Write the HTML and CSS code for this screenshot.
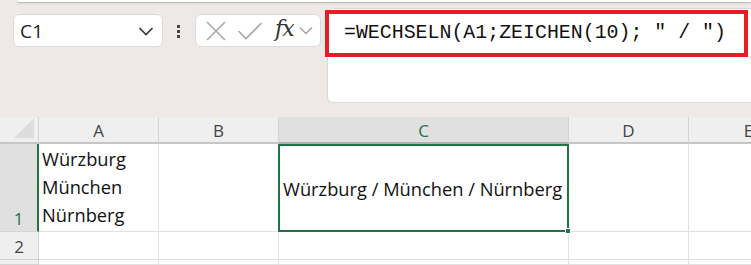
FILE: index.html
```html
<!DOCTYPE html>
<html lang="de">
<head>
<meta charset="utf-8">
<link rel="stylesheet" href="styles.css">
</head>
<body>
<div class="topcard"></div>
<div class="toolbar">
  <div class="namebox">
    <span class="ref">C1</span>
    <svg class="chev" width="16" height="10" viewBox="0 0 16 10"><path d="M1.5 2 L8 8.5 L14.5 2" fill="none" stroke="#333" stroke-width="1.6"/></svg>
  </div>
  <div class="dots"><i></i><i></i><i></i></div>
  <div class="fxbox">
    <svg width="22" height="22" viewBox="0 0 22 22"><path d="M2 2 L20 20 M20 2 L2 20" stroke="#a8a8a8" stroke-width="1.6" fill="none"/></svg>
    <svg width="26" height="20" viewBox="0 0 26 20"><path d="M1.5 10 L9 17.5 L24.5 2" stroke="#a8a8a8" stroke-width="1.6" fill="none"/></svg>
    <span class="fx">fx</span>
    <svg width="14" height="9" viewBox="0 0 14 9"><path d="M1 1.5 L7 7.5 L13 1.5" fill="none" stroke="#a0a0a0" stroke-width="1.5"/></svg>
  </div>
  <div class="formulabar">
    <div class="highlight">=WECHSELN(A1;ZEICHEN(10); " / ")</div>
  </div>
</div>
<div class="sheet">
  <div class="corner"><span class="tri"></span></div>
  <div class="colhead">A</div>
  <div class="colhead">B</div>
  <div class="colhead sel">C</div>
  <div class="colhead">D</div>
  <div class="colhead">E</div>

  <div class="rowhead sel r1">1</div>
  <div class="cell multi">Würzburg<br>München<br>Nürnberg</div>
  <div class="cell"></div>
  <div class="cell active">Würzburg / München / Nürnberg<span class="handle"></span></div>
  <div class="cell"></div>
  <div class="cell"></div>

  <div class="rowhead">2</div>
  <div class="cell"></div>
  <div class="cell"></div>
  <div class="cell"></div>
  <div class="cell"></div>
  <div class="cell"></div>

  <div class="rowhead"></div>
  <div class="cell"></div>
  <div class="cell"></div>
  <div class="cell"></div>
  <div class="cell"></div>
  <div class="cell"></div>
</div>
</body>
</html>
```
FILE: styles.css
```css
* { box-sizing: border-box; }
html, body { margin: 0; padding: 0; }
body {
  width: 751px;
  height: 265px;
  overflow: hidden;
  background: #eee9e7;
  font-family: "Open Sans", "Liberation Sans", sans-serif;
  color: #111;
}
.topcard {
  height: 2px;
  margin-left: 17px;
  background: #fff;
  border-radius: 0 0 0 5px;
  box-shadow: 0 1px 2px rgba(0,0,0,0.25);
}
.toolbar {
  display: flex;
  align-items: flex-start;
  height: 115px;
}
.namebox {
  margin-top: 12px;
  margin-left: 13px;
  width: 150px;
  height: 33px;
  background: #fff;
  border: 1px solid #dedad8;
  border-radius: 6px;
  display: flex;
  align-items: center;
  justify-content: space-between;
  padding: 0 8px 0 6px;
}
.ref { font-size: 19px; color: #222; letter-spacing: 0.3px; }
.dots {
  margin-top: 23px;
  margin-left: 14px;
  width: 4px;
  display: flex;
  flex-direction: column;
  gap: 2px;
}
.dots i { display: block; width: 3px; height: 3px; background: #444; }
.fxbox {
  margin-top: 12px;
  margin-left: 14px;
  width: 126px;
  height: 33px;
  background: #fff;
  border: 1px solid #dedad8;
  border-radius: 6px;
  display: flex;
  align-items: center;
  padding: 0 4px 0 9px;
}
.fxbox svg:nth-child(2) { margin-left: 10px; }
.fx {
  margin-left: 12px;
  font-family: "DejaVu Serif", "Liberation Serif", serif;
  font-style: italic;
  font-size: 22px;
  color: #333;
  line-height: 1;
  margin-top: -4px;
  letter-spacing: -1px;
}
.fxbox svg:last-child { margin-left: 5px; }
.formulabar {
  margin-top: 6px;
  margin-left: 6px;
  flex: 1;
  height: 95px;
  background: #fff;
  border: 1px solid #dcd8d6;
  border-right: none;
  border-radius: 6px 0 0 6px;
}
.highlight {
  margin-top: 1px;
  margin-left: -3px;
  width: 423px;
  height: 47px;
  border: 4px solid #e81c24;
  font-family: "Liberation Mono", monospace;
  font-size: 19.9px;
  color: #111;
  padding-left: 15px;
  line-height: 38px;
  white-space: pre;
}
.sheet {
  display: grid;
  grid-template-columns: 39px 120px 120px 290px 120px 120px;
  grid-template-rows: 27px 88px 28px 1fr;
  height: 148px;
  background: #fff;
}
.corner {
  background: #efefef;
  border-bottom: 2px solid #c6c6c6;
  border-right: 1px solid #d4d4d4;
  position: relative;
}
.tri {
  position: absolute;
  right: 4px;
  bottom: 4px;
  width: 0; height: 0;
  border-left: 20px solid transparent;
  border-bottom: 20px solid #dcdcdc;
}
.colhead {
  background: #efefef;
  border-bottom: 2px solid #c6c6c6;
  border-right: 1px solid #d4d4d4;
  text-align: center;
  font-size: 17px;
  line-height: 27px;
  color: #444;
}
.colhead.sel { background: #e0e0e0; color: #217346; border-bottom-color: #b0b0b0; }
.rowhead {
  background: #efefef;
  border-bottom: 1px solid #d4d4d4;
  border-right: 1px solid #d4d4d4;
  text-align: center;
  font-size: 17px;
  color: #444;
  display: flex;
  align-items: flex-end;
  justify-content: center;
  padding-bottom: 1px;
}
.rowhead.sel { background: #e0e0e0; color: #217346; border-right: 2px solid #217346; }
.cell {
  border-right: 1px solid #e1e1e1;
  border-bottom: 1px solid #e1e1e1;
  font-size: 18.3px;
}
.cell.multi {
  line-height: 28px;
  padding: 1px 0 0 3px;
}
.cell.active {
  position: relative;
  border: 2px solid #217346;
  margin-left: -1px;
  display: flex;
  align-items: center;
  padding-left: 3px;
}
.handle {
  position: absolute;
  right: -4px;
  bottom: -4px;
  width: 6px;
  height: 6px;
  background: #217346;
  border: 1px solid #fff;
}
```
